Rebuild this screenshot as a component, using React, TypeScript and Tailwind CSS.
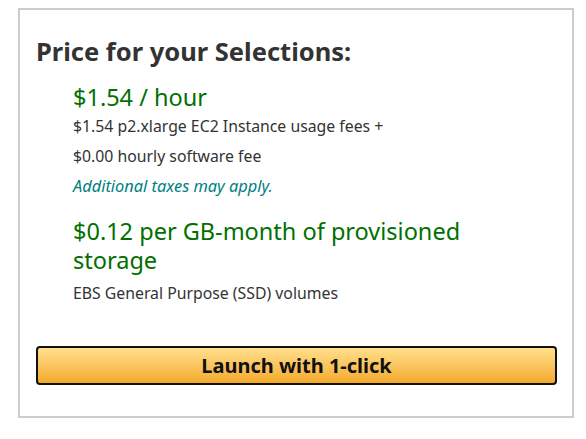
export default function App() {
  return (
    <div className="min-h-screen bg-white px-[18px] pt-[8px] font-['Noto_Sans',sans-serif]">
      <div className="w-[556px] h-[410px] border-2 border-[#cccccc] px-[16px]">
        <h2 className="mt-[25px] text-[25.5px] font-bold leading-[32px] text-[#333333]">
          Price for your Selections:
        </h2>
        <div className="pl-[37px]">
          <div className="mt-[15px] text-[23.5px] leading-[30px] text-[#007000]">$1.54 / hour</div>
          <p className="text-[15.8px] leading-[29px] text-[#333333]">
            $1.54 p2.xlarge EC2 Instance usage fees +
          </p>
          <p className="text-[15.8px] leading-[30px] text-[#333333]">$0.00 hourly software fee</p>
          <p className="text-[16.4px] leading-[30px] italic text-[#007f7f]">Additional taxes may apply.</p>
          <div className="mt-[16px] w-[400px] text-[23.5px] leading-[29px] text-[#007000]">
            $0.12 per GB-month of provisioned storage
          </div>
          <p className="mt-[3px] text-[15.8px] leading-[30px] text-[#333333]">EBS General Purpose (SSD) volumes</p>
        </div>
        <button className="mt-[38px] w-[521px] h-[39px] rounded-[4px] border-2 border-[#111111] bg-gradient-to-b from-[#ffdf8a] to-[#f4aa25] text-[20px] font-bold text-[#111111]">
          Launch with 1-click
        </button>
      </div>
    </div>
  );
}
